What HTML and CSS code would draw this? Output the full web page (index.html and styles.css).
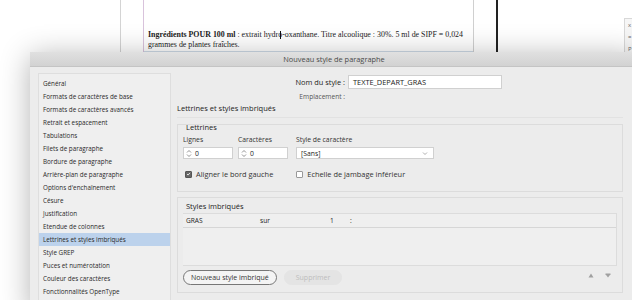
FILE: index.html
```html
<!DOCTYPE html>
<html>
<head>
    <title>Nouveau style de paragraphe</title>
    <link rel="stylesheet" href="styles.css">
</head>
<body>
    <!-- document en arriere-plan -->
    <div class="doc">
        <div class="guide g1"></div>
        <div class="guide g2"></div>
        <div class="guide g3"></div>
        <div class="guide g4"></div>
        <div class="frame">
            <p class="body-text"><b>Ingrédients POUR 100 ml</b><span> : extrait hydro-oxanthane. Titre alcoolique : 30%. 5 ml de SIPF = 0,024</span><br><span>grammes de plantes fraîches.</span></p>
            <span class="caret"></span>
        </div>
        <div class="mini-panel">
            <span>x</span>
            <span>=</span>
            <span>P</span>
        </div>
    </div>

    <!-- fenetre de dialogue -->
    <div class="dialog">
        <div class="titlebar">Nouveau style de paragraphe</div>
        <div class="dialog-body">
            <ul class="cat-list">
                <li>Général</li>
                <li>Formats de caractères de base</li>
                <li>Formats de caractères avancés</li>
                <li>Retrait et espacement</li>
                <li>Tabulations</li>
                <li>Filets de paragraphe</li>
                <li>Bordure de paragraphe</li>
                <li>Arrière-plan de paragraphe</li>
                <li>Options d'enchaînement</li>
                <li>Césure</li>
                <li>Justification</li>
                <li>Etendue de colonnes</li>
                <li class="selected">Lettrines et styles imbriqués</li>
                <li>Style GREP</li>
                <li>Puces et numérotation</li>
                <li>Couleur des caractères</li>
                <li>Fonctionnalités OpenType</li>
            </ul>

            <div class="pane">
                <div class="name-grid">
                    <label class="name-label">Nom du style :</label>
                    <div class="name-input">TEXTE_DEPART_GRAS</div>
                    <label class="small-label">Emplacement :</label>
                    <div></div>
                </div>

                <h2 class="section-title">Lettrines et styles imbriqués</h2>

                <div class="group lettrines">
                    <div class="group-title">Lettrines</div>
                    <div class="fields">
                        <div class="field">
                            <span class="field-label">Lignes</span>
                            <div class="spin">
                                <svg width="6" height="9" viewBox="0 0 6 9"><path d="M1 3.5 L3 1.5 L5 3.5 M1 5.5 L3 7.5 L5 5.5" fill="none" stroke="#777" stroke-width="0.8"/></svg>
                                <span>0</span>
                            </div>
                        </div>
                        <div class="field">
                            <span class="field-label">Caractères</span>
                            <div class="spin">
                                <svg width="6" height="9" viewBox="0 0 6 9"><path d="M1 3.5 L3 1.5 L5 3.5 M1 5.5 L3 7.5 L5 5.5" fill="none" stroke="#777" stroke-width="0.8"/></svg>
                                <span>0</span>
                            </div>
                        </div>
                        <div class="field field-style">
                            <span class="field-label">Style de caractère</span>
                            <div class="select">
                                <span>[Sans]</span>
                                <svg width="6" height="5" viewBox="0 0 6 5"><path d="M1 1.5 L3 3.5 L5 1.5" fill="none" stroke="#999" stroke-width="0.8"/></svg>
                            </div>
                        </div>
                    </div>
                    <div class="checks">
                        <label class="check"><span class="box on">
                            <svg width="6" height="6" viewBox="0 0 6 6"><path d="M1.2 3 L2.5 4.3 L4.8 1.6" fill="none" stroke="#fff" stroke-width="1"/></svg>
                        </span>Aligner le bord gauche</label>
                        <label class="check"><span class="box"></span>Echelle de jambage inférieur</label>
                    </div>
                </div>

                <div class="group nested">
                    <div class="group-title">Styles imbriqués</div>
                    <div class="table">
                        <div class="row">
                            <span class="c-style">GRAS</span>
                            <span class="c-sur">sur</span>
                            <span class="c-num">1</span>
                            <span class="c-sep">:</span>
                        </div>
                    </div>
                    <div class="actions">
                        <button class="btn">Nouveau style imbriqué</button>
                        <button class="btn disabled">Supprimer</button>
                        <span class="arrows">
                            <svg width="6" height="5" viewBox="0 0 6 5"><path d="M0.5 4.5 L3 0.5 L5.5 4.5 Z" fill="#a0a0a0"/></svg>
                            <svg width="6" height="5" viewBox="0 0 6 5"><path d="M0.5 0.5 L5.5 0.5 L5.5 1.2 L3 4.5 L0.5 1.2 Z" fill="#a0a0a0"/></svg>
                        </span>
                    </div>
                </div>
            </div>
        </div>
    </div>
</body>
</html>
```

FILE: styles.css
```css
body {
    margin: 0;
    width: 632px;
    height: 300px;
    overflow: hidden;
    position: relative;
    background: #fff;
    font-family: "Open Sans", "Noto Sans", sans-serif;
    color: #333;
}

/* document */
.doc {
    position: absolute;
    left: 0;
    top: 0;
    width: 632px;
    height: 60px;
}

.guide {
    position: absolute;
    top: 0;
    height: 60px;
    width: 1px;
}
.g1 { left: 120px; background: #d4d4d4; }
.g2 { left: 143px; background: #d9c3dc; }
.g3 { left: 473px; background: #d0d0d0; }
.g4 { left: 496px; width: 2px; background: #222; }

.frame {
    position: absolute;
    left: 144px;
    top: 30px;
    width: 329px;
    height: 21px;
    border-bottom: 1px solid #cfdbe8;
}

.body-text {
    margin: 0;
    padding-left: 4px;
    font-family: "Liberation Serif", serif;
    font-size: 7.9px;
    line-height: 10px;
    color: #222;
    white-space: nowrap;
}

/* curseur texte dans "hydro" */
.caret {
    position: absolute;
    left: 136px;
    top: 1px;
    height: 8px;
    border-left: 1px solid #111;
}

.mini-panel {
    position: absolute;
    left: 624px;
    top: 18px;
    width: 20px;
    height: 40px;
    border: 1px solid #d8d8d8;
    background: #f6f6f6;
    display: flex;
    flex-direction: column;
    gap: 4px;
    padding: 2px 0 0 3px;
    font-size: 6px;
    color: #666;
}

/* dialogue */
.dialog {
    position: absolute;
    left: 30px;
    top: 52px;
    width: 608px;
    height: 260px;
    background: #ececec;
    box-shadow: 0 4px 28px rgba(0, 0, 0, 0.3);
}

.titlebar {
    height: 14px;
    line-height: 15px;
    text-align: center;
    font-size: 7.4px;
    color: #4a4a4a;
    background: linear-gradient(#e0e0e0, #d2d2d2);
    border-bottom: 1px solid #c4c4c4;
}

.dialog-body {
    display: flex;
    gap: 6px;
    padding: 6px 0 0 8px;
}

.cat-list {
    list-style: none;
    margin: 0;
    padding: 3px 0 6px;
    width: 131px;
    background: #efefef;
    border: 1px solid #dedede;
    font-size: 6.3px;
    color: #2a2a2a;
}

.cat-list li {
    height: 13px;
    line-height: 13px;
    padding-left: 4px;
}

.cat-list li.selected {
    background: #bcd2ec;
}

.pane {
    flex: 1;
    display: flex;
    flex-direction: column;
    padding-right: 15px;
}

.name-grid {
    display: grid;
    grid-template-columns: 168px 154px;
    column-gap: 3px;
    row-gap: 4px;
    align-items: center;
    margin-top: 2px;
}

.name-label {
    text-align: right;
    font-size: 7.4px;
    color: #222;
}

.name-input {
    height: 12px;
    line-height: 12px;
    background: #fff;
    border: 1px solid #d0d0d0;
    padding-left: 4px;
    font-size: 7.4px;
    color: #222;
}

.small-label {
    text-align: right;
    font-size: 6.6px;
    line-height: 8px;
    color: #555;
}

.section-title {
    margin: 2px 0 0;
    padding-bottom: 4px;
    font-size: 7.5px;
    font-weight: normal;
    color: #222;
    border-bottom: 1px solid #e2e2e2;
}

.group {
    border: 1px solid #dcdcdc;
    padding: 0 5px;
    box-sizing: border-box;
}

.group-title {
    font-size: 7.5px;
    color: #222;
    height: 8px;
    line-height: 8px;
    margin-left: 3px;
}

.lettrines {
    margin-top: 6px;
    height: 68px;
}

.lettrines .group-title {
    margin-top: -2px;
}

.fields {
    display: flex;
    gap: 5px;
    margin-top: 5px;
}

.field {
    display: flex;
    flex-direction: column;
    gap: 4px;
}

.field-label {
    font-size: 6.8px;
    color: #333;
    height: 7px;
    line-height: 7px;
}

.spin {
    width: 50px;
    height: 12px;
    box-sizing: border-box;
    background: #fff;
    border: 1px solid #d0d0d0;
    display: flex;
    align-items: center;
    gap: 3px;
    padding-left: 2px;
    font-size: 6.8px;
    color: #222;
}

.field-style {
    margin-left: 3px;
}

.select {
    width: 138px;
    height: 12px;
    box-sizing: border-box;
    background: #fff;
    border: 1px solid #d0d0d0;
    display: flex;
    align-items: center;
    justify-content: space-between;
    padding: 0 5px 0 4px;
    font-size: 6.8px;
    color: #222;
}

.checks {
    display: flex;
    gap: 21px;
    margin-top: 10px;
    margin-left: 2px;
}

.check {
    display: flex;
    align-items: center;
    gap: 4px;
    font-size: 7.4px;
    color: #333;
}

.check:last-child {
    margin-left: 2px;
}

.box {
    width: 7px;
    height: 7px;
    box-sizing: border-box;
    border: 1px solid #999;
    border-radius: 1px;
    background: #fff;
    display: flex;
    align-items: center;
    justify-content: center;
}

.box.on {
    background: #666;
    border-color: #555;
}

.nested {
    margin-top: 5px;
    height: 96px;
    padding-top: 4px;
}

.table {
    margin-top: 3px;
    height: 53px;
    box-sizing: border-box;
    border: 1px solid #dcdcdc;
    border-left: none;
    background: #efefef;
}

.row {
    height: 14px;
    box-sizing: border-box;
    display: flex;
    align-items: center;
    border-bottom: 1px solid #d6d6d6;
    font-size: 6.6px;
    color: #222;
    padding-left: 3px;
}

.c-style { width: 74px; }
.c-sur { width: 70px; }
.c-num { width: 20px; }

.actions {
    display: flex;
    align-items: center;
    gap: 7px;
    margin-top: 4px;
}

.btn {
    height: 15px;
    padding: 0 7px;
    font-family: inherit;
    font-size: 7px;
    color: #333;
    background: #f4f4f4;
    border: 1px solid #777;
    border-radius: 8px;
}

.btn.disabled {
    color: #bdbdbd;
    background: #e4e4e4;
    border-color: #e4e4e4;
    padding: 0 11px;
}

.arrows {
    margin-left: auto;
    margin-right: 6px;
    margin-top: -4px;
    display: flex;
    gap: 11px;
}
```
